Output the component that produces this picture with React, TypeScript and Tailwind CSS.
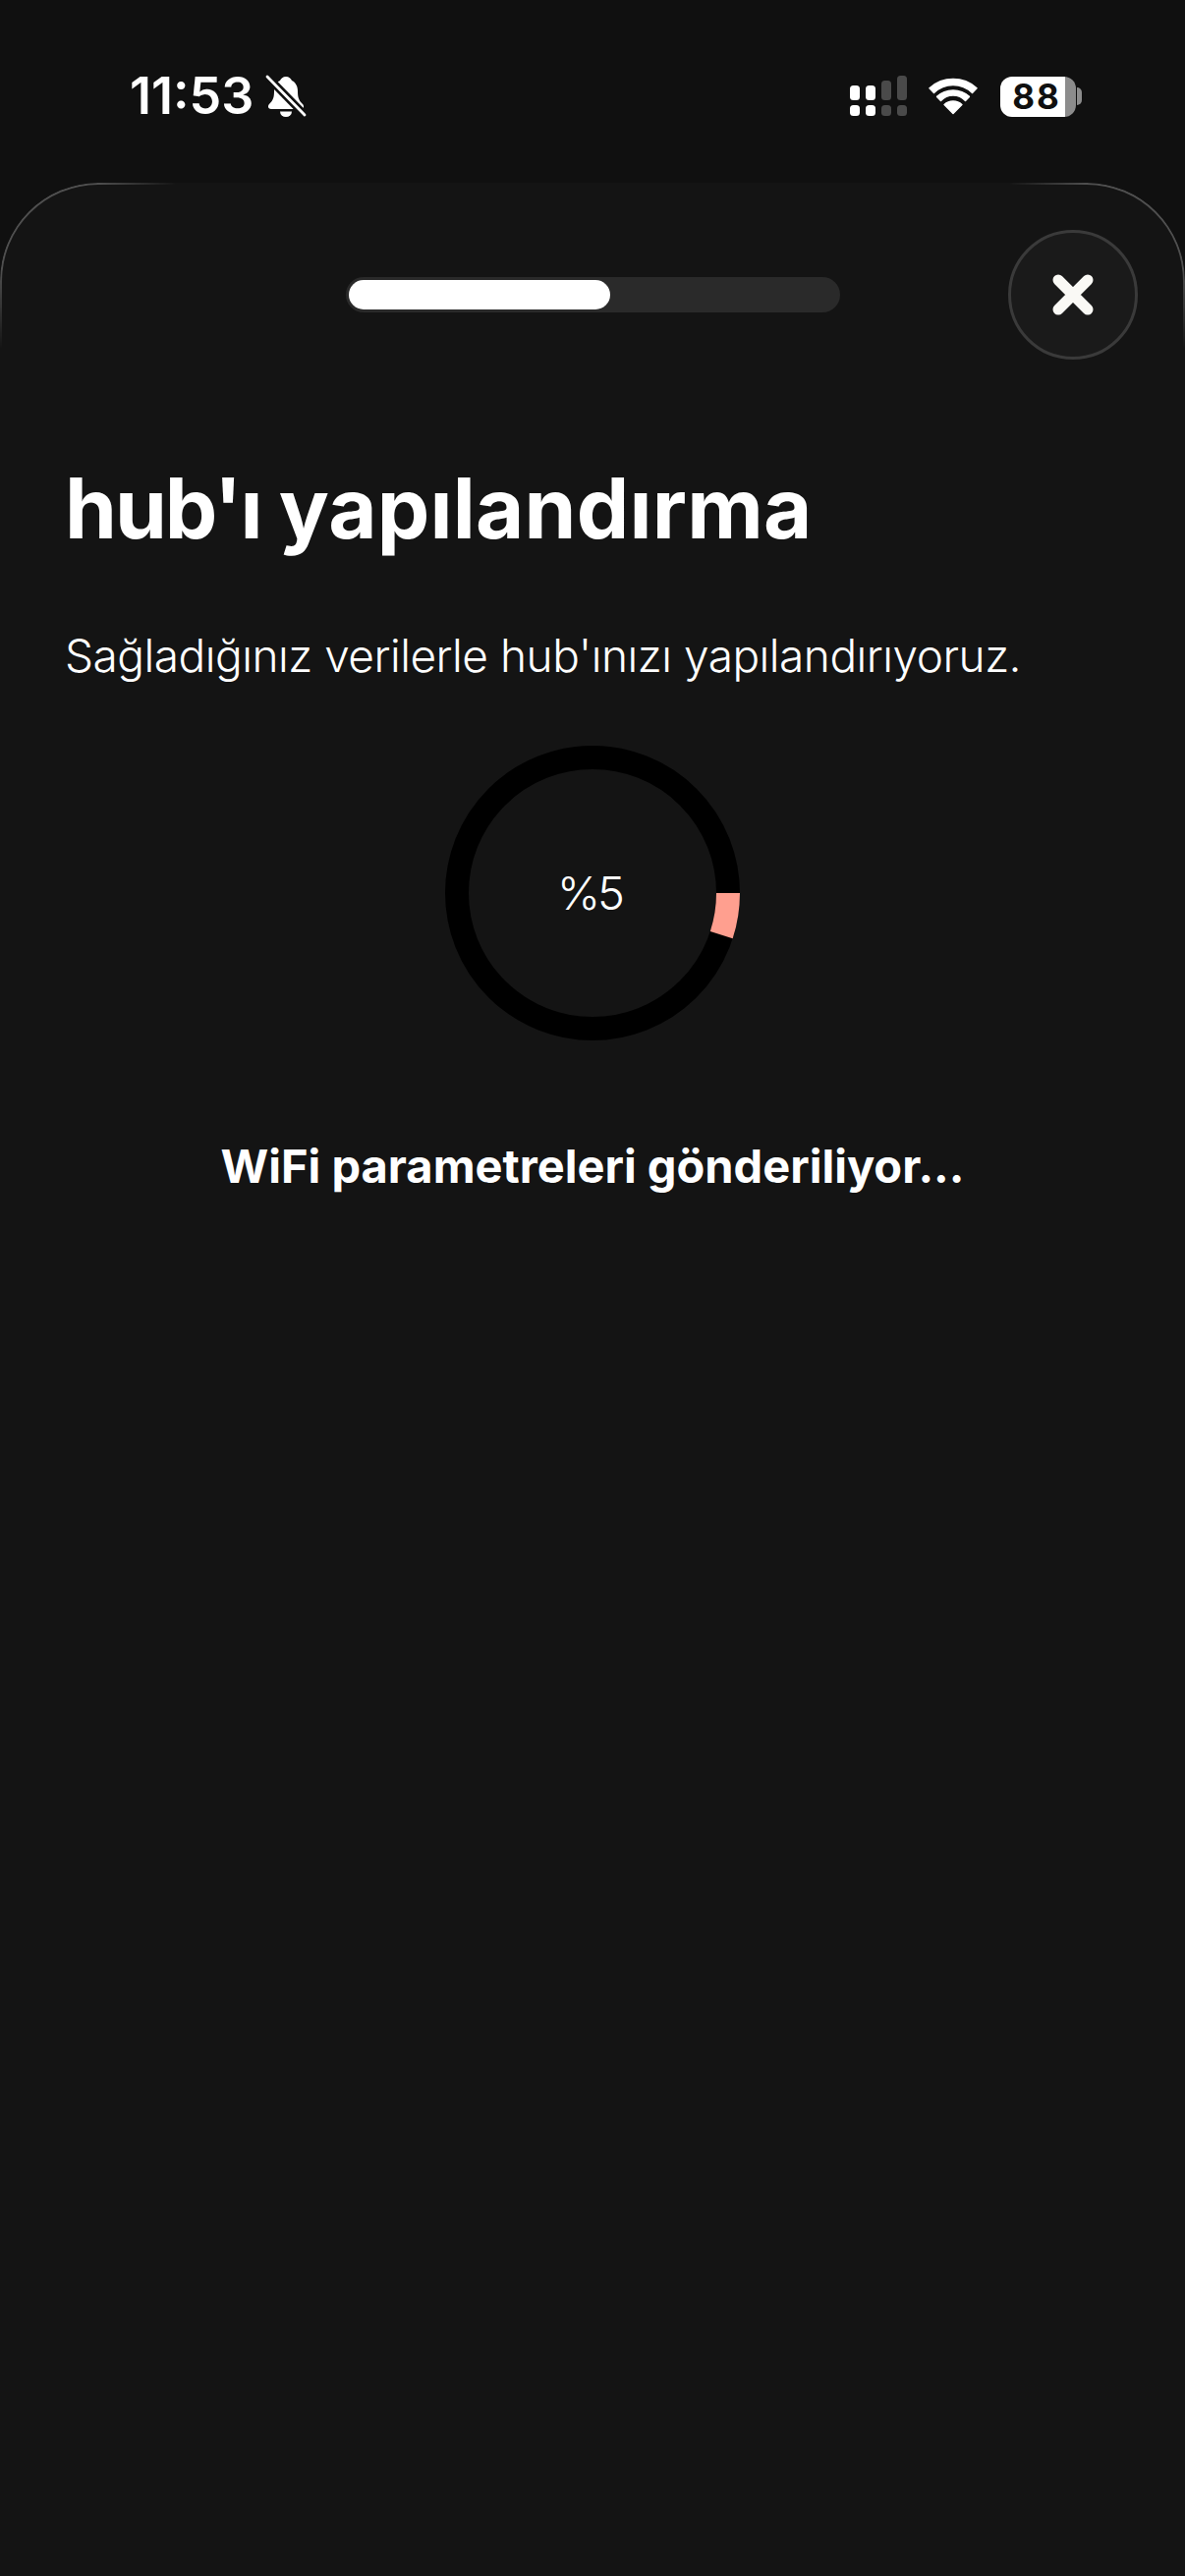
const FONT = "font-['Inter','Liberation_Sans',sans-serif]";

const BellSlash = () => (
  <svg width="42" height="44" viewBox="0 0 42 44" className="ml-[12px]">
    <path
      d="M21 2C24 2 26 4 27 6C31 8 33 12 33 17C33 23 34 26 38 30C40 32 39 35 36 35L6 35C3 35 2 32 4 30C8 26 9 23 9 17C9 12 11 8 15 6C16 4 18 2 21 2Z"
      fill="#fff"
    />
    <path d="M15 37.5h12a6 5.5 0 0 1-12 0Z" fill="#fff" />
    <path d="M2 2L40 41" stroke="#101010" strokeWidth="8" />
    <path d="M2 2L40 41" stroke="#fff" strokeWidth="2.8" strokeLinecap="round" />
  </svg>
);

const SignalIcon = () => (
  <svg width="58" height="42" viewBox="0 0 58 42">
    <rect x="0" y="10" width="10" height="15" rx="3.5" fill="#fff" />
    <rect x="16" y="10" width="10" height="15" rx="3.5" fill="#fff" />
    <rect x="32" y="5" width="10" height="20" rx="3.5" fill="#4a4a4a" />
    <rect x="48" y="0" width="10" height="25" rx="3.5" fill="#4a4a4a" />
    <rect x="0" y="30" width="10" height="11" rx="3.5" fill="#fff" />
    <rect x="16" y="30" width="10" height="11" rx="3.5" fill="#fff" />
    <rect x="32" y="30" width="10" height="11" rx="3.5" fill="#4a4a4a" />
    <rect x="48" y="30" width="10" height="11" rx="3.5" fill="#4a4a4a" />
  </svg>
);

const WifiIcon = () => (
  <svg width="50" height="38" viewBox="0 0 50 38">
    <g fill="#fff" stroke="#fff" strokeWidth="1.5" strokeLinejoin="round">
      <path d="M25 36.5L16.1 27.5A13 13 0 0 1 33.9 27.5Z" />
      <path d="M8.6 19.4A24 24 0 0 1 41.4 19.4L37.5 23.5A17 17 0 0 0 12.5 23.5Z" />
      <path d="M1 10.7A36 36 0 0 1 49 10.7L44.5 15.5A28 28 0 0 0 5.5 15.5Z" />
    </g>
  </svg>
);

const Battery = () => (
  <div className="flex items-center gap-[1px]">
    <div className="flex h-[41px] w-[77px] items-center justify-center rounded-[12px] bg-[linear-gradient(to_right,#fff_86%,#8c8c8c_86%)] pr-[3px] font-['Inter',sans-serif] text-[35px] font-bold tracking-[2px] text-[#101010]">
      88
    </div>
    <div className="h-[18px] w-[5px] rounded-r-full bg-[#8c8c8c]" />
  </div>
);

const ProgressRing = () => (
  <div className="relative flex h-[300px] w-[300px] items-center justify-center">
    <svg width="300" height="300" viewBox="0 0 300 300" className="absolute inset-0">
      <circle cx="150" cy="150" r="138" fill="none" stroke="#000" strokeWidth="24" />
      <circle
        cx="150"
        cy="150"
        r="138"
        fill="none"
        stroke="#ff9f8f"
        strokeWidth="24"
        strokeDasharray="43.35 867.08"
      />
    </svg>
    <span className="pr-[6px] text-[47px] font-light tracking-[-3px] text-white">%5</span>
  </div>
);

export default function App() {
  return (
    <div className={`flex h-[2622px] w-[1206px] flex-col bg-[#101010] ${FONT}`}>
      {/* status bar */}
      <div className="flex h-[186px] shrink-0 items-start justify-between pl-[132px] pr-[105px] pt-[70px]">
        <div className="flex items-center">
          <span className="text-[52px] font-semibold leading-[56px] text-white">11:53</span>
          <BellSlash />
        </div>
        <div className="mt-[7px] flex items-center">
          <SignalIcon />
          <div className="ml-[22px] mr-[23px]">
            <WifiIcon />
          </div>
          <Battery />
        </div>
      </div>

      {/* sheet */}
      <div className="relative flex-1 rounded-t-[100px] bg-[#141414] px-[66px] pt-[48px]">
        <div className="pointer-events-none absolute inset-x-0 top-0 h-[170px] rounded-t-[100px] border-x-2 border-t-2 border-white/25 [mask-composite:intersect] [mask-image:linear-gradient(to_right,black_100px,transparent_180px,transparent_1026px,black_1106px),linear-gradient(to_bottom,black_90px,transparent_170px)]" />

        <div className="relative -mr-[18px] grid grid-cols-[286px_503px_1fr] items-center">
          <div />
          <div className="h-[36px] rounded-full bg-[#2a2a2a] p-[3px]">
            <div className="h-full w-[53.5%] rounded-full bg-white" />
          </div>
          <button className="flex h-[132px] w-[132px] items-center justify-center justify-self-end rounded-full border-[3px] border-[#3a3a3a] bg-[#1a1a1a]">
            <svg width="42" height="42" viewBox="0 0 42 42">
              <path d="M6 6L36 36M36 6L6 36" stroke="#faf9f5" strokeWidth="11" strokeLinecap="round" />
            </svg>
          </button>
        </div>

        <h1 className="mt-[102px] text-[85px] font-bold leading-[100px] [word-spacing:-2px] text-white">
          <span className="tracking-[-2px]">hub'ı</span> <span className="tracking-[0.2px]">yapılandırma</span>
        </h1>
        <p className="mt-[69px] text-[46px] font-light leading-[60px] tracking-[-0.5px] text-white">
          Sağladığınız verilerle hub'ınızı yapılandırıyoruz.
        </p>

        <div className="mt-[62px] flex flex-col items-center">
          <ProgressRing />
          <p className="mt-[98px] text-[47px] font-bold leading-[60px] text-white">WiFi parametreleri gönderiliyor...</p>
        </div>
      </div>
    </div>
  );
}
